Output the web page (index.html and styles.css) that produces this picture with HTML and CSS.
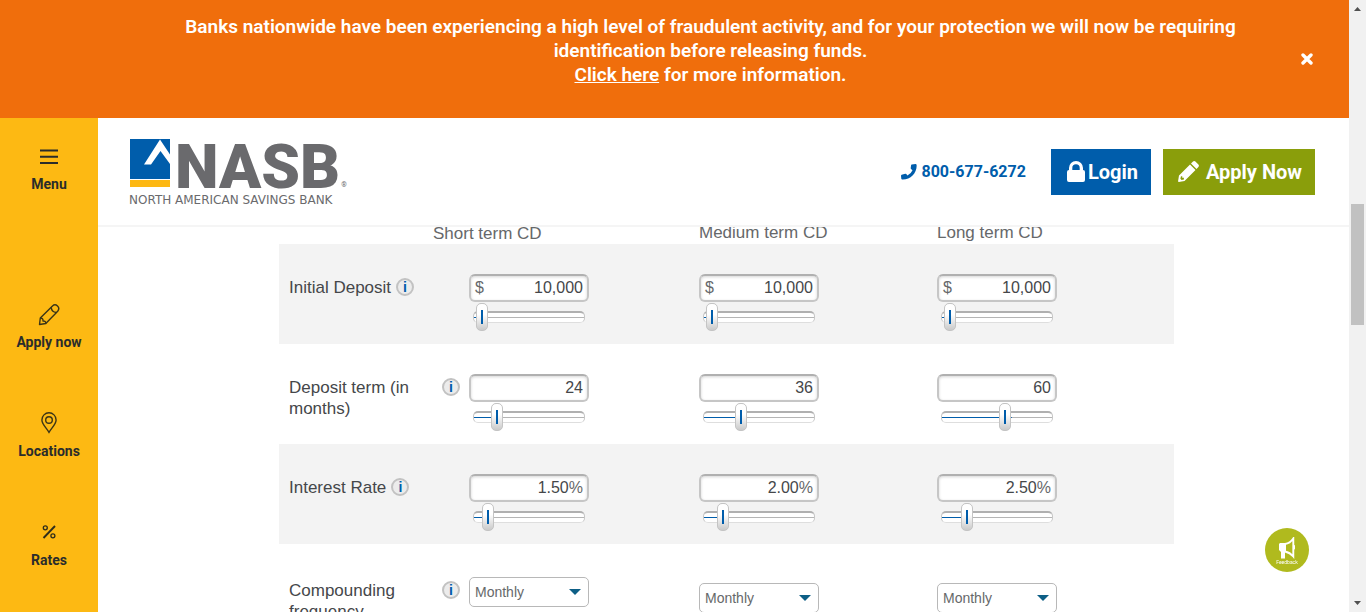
FILE: index.html
```html
<!DOCTYPE html>
<html lang="en">
<head>
<meta charset="utf-8">
<title>NASB CD Calculator</title>
<link rel="stylesheet" href="styles.css">
</head>
<body>
<div class="page">
  <div class="alert" role="alert">
    <p class="alert-text">Banks nationwide have been experiencing a high level of fraudulent activity, and for your protection we will now be requiring identification before releasing funds.<br><a href="#info">Click here</a> for more information.</p>
    <button class="alert-close" type="button" aria-label="Close">
      <svg width="12" height="12" viewBox="0 0 12 12"><path d="M2 2l8 8M10 2l-8 8" stroke="#fff" stroke-width="3.4" stroke-linecap="round"/></svg>
    </button>
  </div>
  <div class="body">
    <nav class="sidebar">
      <a class="side-item side-menu" href="#menu">
        <svg width="24" height="24" viewBox="0 0 24 24"><path d="M3 5.5h18M3 11.7h18M3 18h18" stroke="#2a2c2b" stroke-width="2"/></svg>
        <span>Menu</span>
      </a>
      <a class="side-item" href="#apply">
        <svg width="24" height="24" viewBox="0 0 24 24" fill="none" stroke="#3b3517" stroke-width="1.400" stroke-linejoin="round"><path d="M2.500 21.500l.8-6.500L15.500 3q2.500-2.400 5 0t.2 5.200L8.800 20.500z"/><path d="M14.200 4.300q.3 4.800 5.200 5.200M3.300 15q3 0 2.700 3 2.800-.3 2.800 2.500"/></svg>
        <span>Apply now</span>
      </a>
      <a class="side-item" href="#locations">
        <svg width="24" height="24" viewBox="0 0 24 24" fill="none" stroke="#3b3517" stroke-width="1.4"><path d="M12 20.300C9.500 16 4.900 12 4.900 7.900a7.100 7.100 0 0 1 14.200 0C19.100 12 14.500 16 12 20.300z"/><circle cx="12" cy="8" r="3.300"/></svg>
        <span>Locations</span>
      </a>
      <a class="side-item" href="#rates">
        <svg width="24" height="24" viewBox="0 0 24 24" fill="none" stroke="#2f2d1b"><path d="M6.500 17L18 5" stroke-width="1.900"/><circle cx="8.300" cy="6.800" r="2" stroke-width="1.300"/><circle cx="15.900" cy="14.800" r="2" stroke-width="1.300"/></svg>
        <span>Rates</span>
      </a>
    </nav>
    <main class="main">
      <header class="header">
        <a class="logo" href="#home">
          <span class="logo-top">
            <svg class="logo-mark" width="40" height="48" viewBox="0 0 40 48"><path fill="#005dab" d="M0 0h40v40H0z"/><path fill="#fdb813" d="M0 41h40v7H0z"/><path fill="#fff" d="M30 .5l10 15v9.500L30.500 12 21 25.500h-7z"/></svg>
            <span class="logo-name">NASB</span><span class="logo-reg">®</span>
          </span>
          <span class="logo-tag">NORTH AMERICAN SAVINGS BANK</span>
        </a>
        <div class="actions">
          <a class="phone" href="tel:8006776272">
            <svg width="16" height="16" viewBox="0 0 16 16"><path fill="#005dab" d="M10.700.6L14.600 0q.9 0 1 .9C16.300 8.500 9.500 16 1.200 15.600q-.7-.1-.9-.8L0 11.700q0-.7.6-1l3.700-1q.6-.1 1 .4l1.100 1.500Q10.200 9.500 11.500 6.200L10 4.900q-.4-.4-.3-.9l.4-2.800q.1-.5.600-.6z"/></svg>
            800-677-6272
          </a>
          <a class="btn btn-login" href="#login">
            <svg width="18" height="21" viewBox="0 0 18 21"><path fill="#fff" d="M2 9V7a7 7 0 0 1 14 0v2q2 0 2 2v8q0 2-2 2H2q-2 0-2-2v-8q0-2 2-2zm3.300 0h7.400V7a3.700 3.700 0 0 0-7.400 0z"/></svg>
            Login
          </a>
          <a class="btn btn-apply" href="#apply-now">
            <svg width="21" height="21" viewBox="0 0 21 21"><path fill="#fff" fill-rule="evenodd" d="M12 3.500L17.500 9 6.500 20l-5.600 1q-1-.1-.8-1L1 14.500zM2.900 15.500l-.5 2.300L3.600 19l2.300-.6v-1.700H4.200v-1.600zM13 2.500L15 .6q1.200-1 2.400 0l3 3q1 1.200 0 2.400L18.500 8z"/></svg>
            Apply Now
          </a>
        </div>
      </header>
      <section class="content">
        <table class="calc">
          <colgroup><col class="c-label"><col class="c-short"><col class="c-medium"><col class="c-long"></colgroup>
          <thead>
            <tr><td></td><th scope="col"><span class="short-head">Short term CD</span></th><th scope="col">Medium term CD</th><th scope="col">Long term CD</th></tr>
          </thead>
          <tbody>
            <tr class="shade">
              <th scope="row"><span class="row-label"><span>Initial Deposit</span><button class="info" type="button" aria-label="About initial deposit">i</button></span></th>
              <td><span class="field"><span class="unit">$</span><input type="text" value="10,000" aria-label="Short term initial deposit"></span><input class="slider" type="range" value="2" style="--pos:2%" aria-label="Short term deposit slider"></td>
              <td><span class="field"><span class="unit">$</span><input type="text" value="10,000" aria-label="Medium term initial deposit"></span><input class="slider" type="range" value="2" style="--pos:2%" aria-label="Medium term deposit slider"></td>
              <td><span class="field"><span class="unit">$</span><input type="text" value="10,000" aria-label="Long term initial deposit"></span><input class="slider" type="range" value="2" style="--pos:2%" aria-label="Long term deposit slider"></td>
            </tr>
            <tr>
              <th scope="row"><span class="row-label"><span>Deposit term (in months)</span><button class="info" type="button" aria-label="About deposit term">i</button></span></th>
              <td><span class="field"><input type="text" value="24" aria-label="Short term months"></span><input class="slider" type="range" value="17" style="--pos:17%" aria-label="Short term months slider"></td>
              <td><span class="field"><input type="text" value="36" aria-label="Medium term months"></span><input class="slider" type="range" value="32" style="--pos:32%" aria-label="Medium term months slider"></td>
              <td><span class="field"><input type="text" value="60" aria-label="Long term months"></span><input class="slider" type="range" value="58" style="--pos:58%" aria-label="Long term months slider"></td>
            </tr>
            <tr class="shade">
              <th scope="row"><span class="row-label"><span>Interest Rate</span><button class="info" type="button" aria-label="About interest rate">i</button></span></th>
              <td><span class="field"><input type="text" value="1.50" aria-label="Short term rate"><span class="unit">%</span></span><input class="slider" type="range" value="8" style="--pos:8%" aria-label="Short term rate slider"></td>
              <td><span class="field"><input type="text" value="2.00" aria-label="Medium term rate"><span class="unit">%</span></span><input class="slider" type="range" value="13" style="--pos:13%" aria-label="Medium term rate slider"></td>
              <td><span class="field"><input type="text" value="2.50" aria-label="Long term rate"><span class="unit">%</span></span><input class="slider" type="range" value="19" style="--pos:19%" aria-label="Long term rate slider"></td>
            </tr>
            <tr class="freq">
              <th scope="row"><span class="row-label"><span>Compounding frequency</span><button class="info" type="button" aria-label="About compounding frequency">i</button></span></th>
              <td class="freq-short"><span class="pick"><select aria-label="Short term frequency"><option>Monthly</option></select><svg width="12" height="6" viewBox="0 0 12 6"><path fill="#0d5f86" d="M0 0h12L6 6z"/></svg></span></td>
              <td><span class="pick"><select aria-label="Medium term frequency"><option>Monthly</option></select><svg width="12" height="6" viewBox="0 0 12 6"><path fill="#0d5f86" d="M0 0h12L6 6z"/></svg></span></td>
              <td><span class="pick"><select aria-label="Long term frequency"><option>Monthly</option></select><svg width="12" height="6" viewBox="0 0 12 6"><path fill="#0d5f86" d="M0 0h12L6 6z"/></svg></span></td>
            </tr>
          </tbody>
        </table>
      </section>
    </main>
  </div>
</div>
<div class="scrollbar" aria-hidden="true">
  <svg width="17" height="17" viewBox="0 0 17 17"><path fill="#505050" d="M5 11l3.500-4 3.500 4z"/></svg>
  <div class="scroll-before"></div>
  <div class="scroll-thumb"></div>
  <div class="scroll-after"></div>
  <svg width="17" height="17" viewBox="0 0 17 17"><path fill="#505050" d="M5 6l3.500 4L12 6z"/></svg>
</div>
<button class="feedback" type="button">
  <svg width="18" height="22" viewBox="0 0 18 22"><path fill="#fff" d="M2 6h6v9H7v6.500H3V15L1 13V7zM15.500 7.500l1.500 1v3.500l-1.500 1z"/><path fill="none" stroke="#fff" stroke-width="1.900" d="M7 7q5-.5 8.300-5.500v18Q12 15.500 7 14.500"/></svg>
  <span>Feedback</span>
</button>
</body>
</html>
```

FILE: styles.css
```css
* { box-sizing: border-box; }
body {
  margin: 0;
  height: 100vh;
  display: flex;
  overflow: hidden;
  background: #fff;
  font-family: Roboto, "Liberation Sans", sans-serif;
}
a { color: inherit; text-decoration: none; }
button { padding: 0; border: 0; background: none; font: inherit; cursor: pointer; }
svg { display: block; flex: none; }

.page { flex: 1; min-width: 0; display: flex; flex-direction: column; }

.alert {
  display: flex;
  align-items: center;
  padding: 15px 36px 31px 120px;
  background: #f06e0c;
  color: #fff;
}
.alert-text {
  flex: 1;
  margin: 0;
  padding: 0 50px;
  text-align: center;
  font-size: 19px;
  font-weight: 600;
  line-height: 24px;
}
.alert-text a { text-decoration: underline; }
.alert-close { margin-top: 16px; }

.body { flex: 1; display: flex; min-height: 0; }
.sidebar {
  flex: none;
  width: 98px;
  padding-top: 27px;
  display: flex;
  flex-direction: column;
  gap: 60px;
  background: #fdb913;
}
.side-item {
  display: flex;
  flex-direction: column;
  align-items: center;
  gap: 5px;
  color: #2a2c2b;
  font-size: 14px;
  font-weight: 700;
  line-height: 20px;
}
.side-menu { margin-bottom: 49px; }

.main { flex: 1; min-width: 0; display: flex; flex-direction: column; }
.header {
  display: flex;
  align-items: center;
  justify-content: space-between;
  padding: 15px 34px 15px 31px;
  border-bottom: 2px solid #f5f5f5;
}
.logo { display: flex; flex-direction: column; padding-top: 6px; color: #6a6a6d; }
.logo-top { display: flex; align-items: flex-end; gap: 5px; padding-left: 1px; }
.logo-mark { margin-bottom: 4px; }
.logo-name { font-size: 62px; font-weight: 900; line-height: 48px; }
.logo-reg { margin-left: -4px; font-size: 7px; line-height: 12px; }
.logo-tag { font-family: "DejaVu Sans", sans-serif; font-size: 12px; line-height: 19px; }

.actions { display: flex; align-items: center; gap: 12px; }
.phone {
  display: flex;
  align-items: center;
  gap: 5px;
  margin-right: 13px;
  color: #005dab;
  font-size: 16px;
  font-weight: 700;
}
.btn {
  display: flex;
  align-items: center;
  height: 46px;
  color: #fff;
  font-size: 20px;
  font-weight: 700;
}
.btn-login { gap: 3px; padding: 0 13px 0 16px; background: #005dab; }
.btn-apply { gap: 7px; padding: 0 13px 0 15px; background: #8a9e0b; }

.content {
  flex: 1;
  min-height: 0;
  overflow: hidden;
  padding-left: 6px;
  font-family: "Liberation Sans", Arial, sans-serif;
}
.calc {
  width: 895px;
  max-width: 100%;
  margin: 0 auto;
  table-layout: fixed;
  border-collapse: collapse;
}
.c-label { width: 190px; }
.c-short { width: 230px; }
.c-medium { width: 238px; }
.calc th, .calc td { padding: 0; vertical-align: top; text-align: left; }
.calc thead th {
  height: 17px;
  color: #66686a;
  font-size: 17px;
  font-weight: 400;
  line-height: 12px;
}
.short-head { display: block; margin-left: -36px; line-height: 14px; }
.calc tbody tr { height: 100px; }
.calc tbody td { padding-top: 30px; }
.calc tbody th { padding: 33px 0 0 10px; font-weight: 400; }
.shade { background: #f3f3f3; }
.calc .freq th { padding-top: 36px; }
.calc .freq td { padding-top: 39px; }
.calc .freq .freq-short { padding-top: 33px; }

.row-label {
  display: flex;
  gap: 5px;
  width: 171px;
  color: #45474a;
  font-size: 17px;
  line-height: 21px;
}
.info {
  flex: none;
  width: 18px;
  height: 18px;
  margin-top: 1px;
  border: 2px solid #c2c2c2;
  border-radius: 50%;
  background: #ececec;
  color: #005dab;
  font-size: 14px;
  font-weight: 700;
  line-height: 14px;
  text-align: center;
}

.field {
  display: flex;
  align-items: center;
  width: 120px;
  height: 28px;
  padding: 0 4px;
  border: 2px solid #c6c6c6;
  border-top-color: #b0b0b0;
  border-radius: 6px;
  background: #fff;
  box-shadow: inset 0 1px 3px #d5d5d5;
  color: #66686a;
  font-size: 16px;
}
.field input {
  flex: 1;
  min-width: 0;
  padding: 0;
  border: 0;
  background: none;
  color: #45474a;
  font: inherit;
  text-align: right;
}
.slider {
  display: block;
  width: 112px;
  height: 28px;
  margin: 1px 0 0 4px;
  background: none;
  appearance: none;
}
.slider::-webkit-slider-runnable-track {
  height: 12px;
  border: 1px solid #c6c6c6;
  border-top: 2px solid #b0b0b0;
  border-bottom-color: #dedede;
  border-radius: 5px;
  background:
    linear-gradient(#005dab, #005dab) 0 4px / calc(var(--pos) + 6px) 1px no-repeat,
    linear-gradient(#b5b5b5, #b5b5b5) 0 4px / 100% 1px no-repeat,
    #fff;
}
.slider::-webkit-slider-thumb {
  appearance: none;
  width: 12px;
  height: 28px;
  margin-top: -10px;
  border: 1px solid #c4c4c4;
  border-radius: 5px;
  background:
    linear-gradient(#005dab, #005dab) center 6px / 2px 14px no-repeat,
    linear-gradient(#fff 40%, #c9c9c9);
}

.pick { position: relative; display: block; width: 120px; }
.pick select {
  display: block;
  width: 100%;
  height: 30px;
  padding: 0 5px;
  border: 1px solid #b8b8b8;
  border-radius: 5px;
  background: #fff;
  color: #66686a;
  font: 14px "Liberation Sans", Arial, sans-serif;
  appearance: none;
}
.pick svg { position: absolute; right: 8px; top: 12px; pointer-events: none; }

.scrollbar { flex: none; width: 17px; display: flex; flex-direction: column; background: #f1f1f1; }
.scroll-before { flex: 187; }
.scroll-thumb { flex: 121; margin: 0 2px; background: #c1c1c1; }
.scroll-after { flex: 270; }

.feedback {
  position: fixed;
  right: 57px;
  bottom: 40px;
  width: 44px;
  height: 44px;
  padding-top: 2px;
  display: flex;
  flex-direction: column;
  align-items: center;
  justify-content: center;
  border-radius: 50%;
  background: #b0ba1e;
  color: #fff;
  font-size: 5px;
  line-height: 7px;
}
```
